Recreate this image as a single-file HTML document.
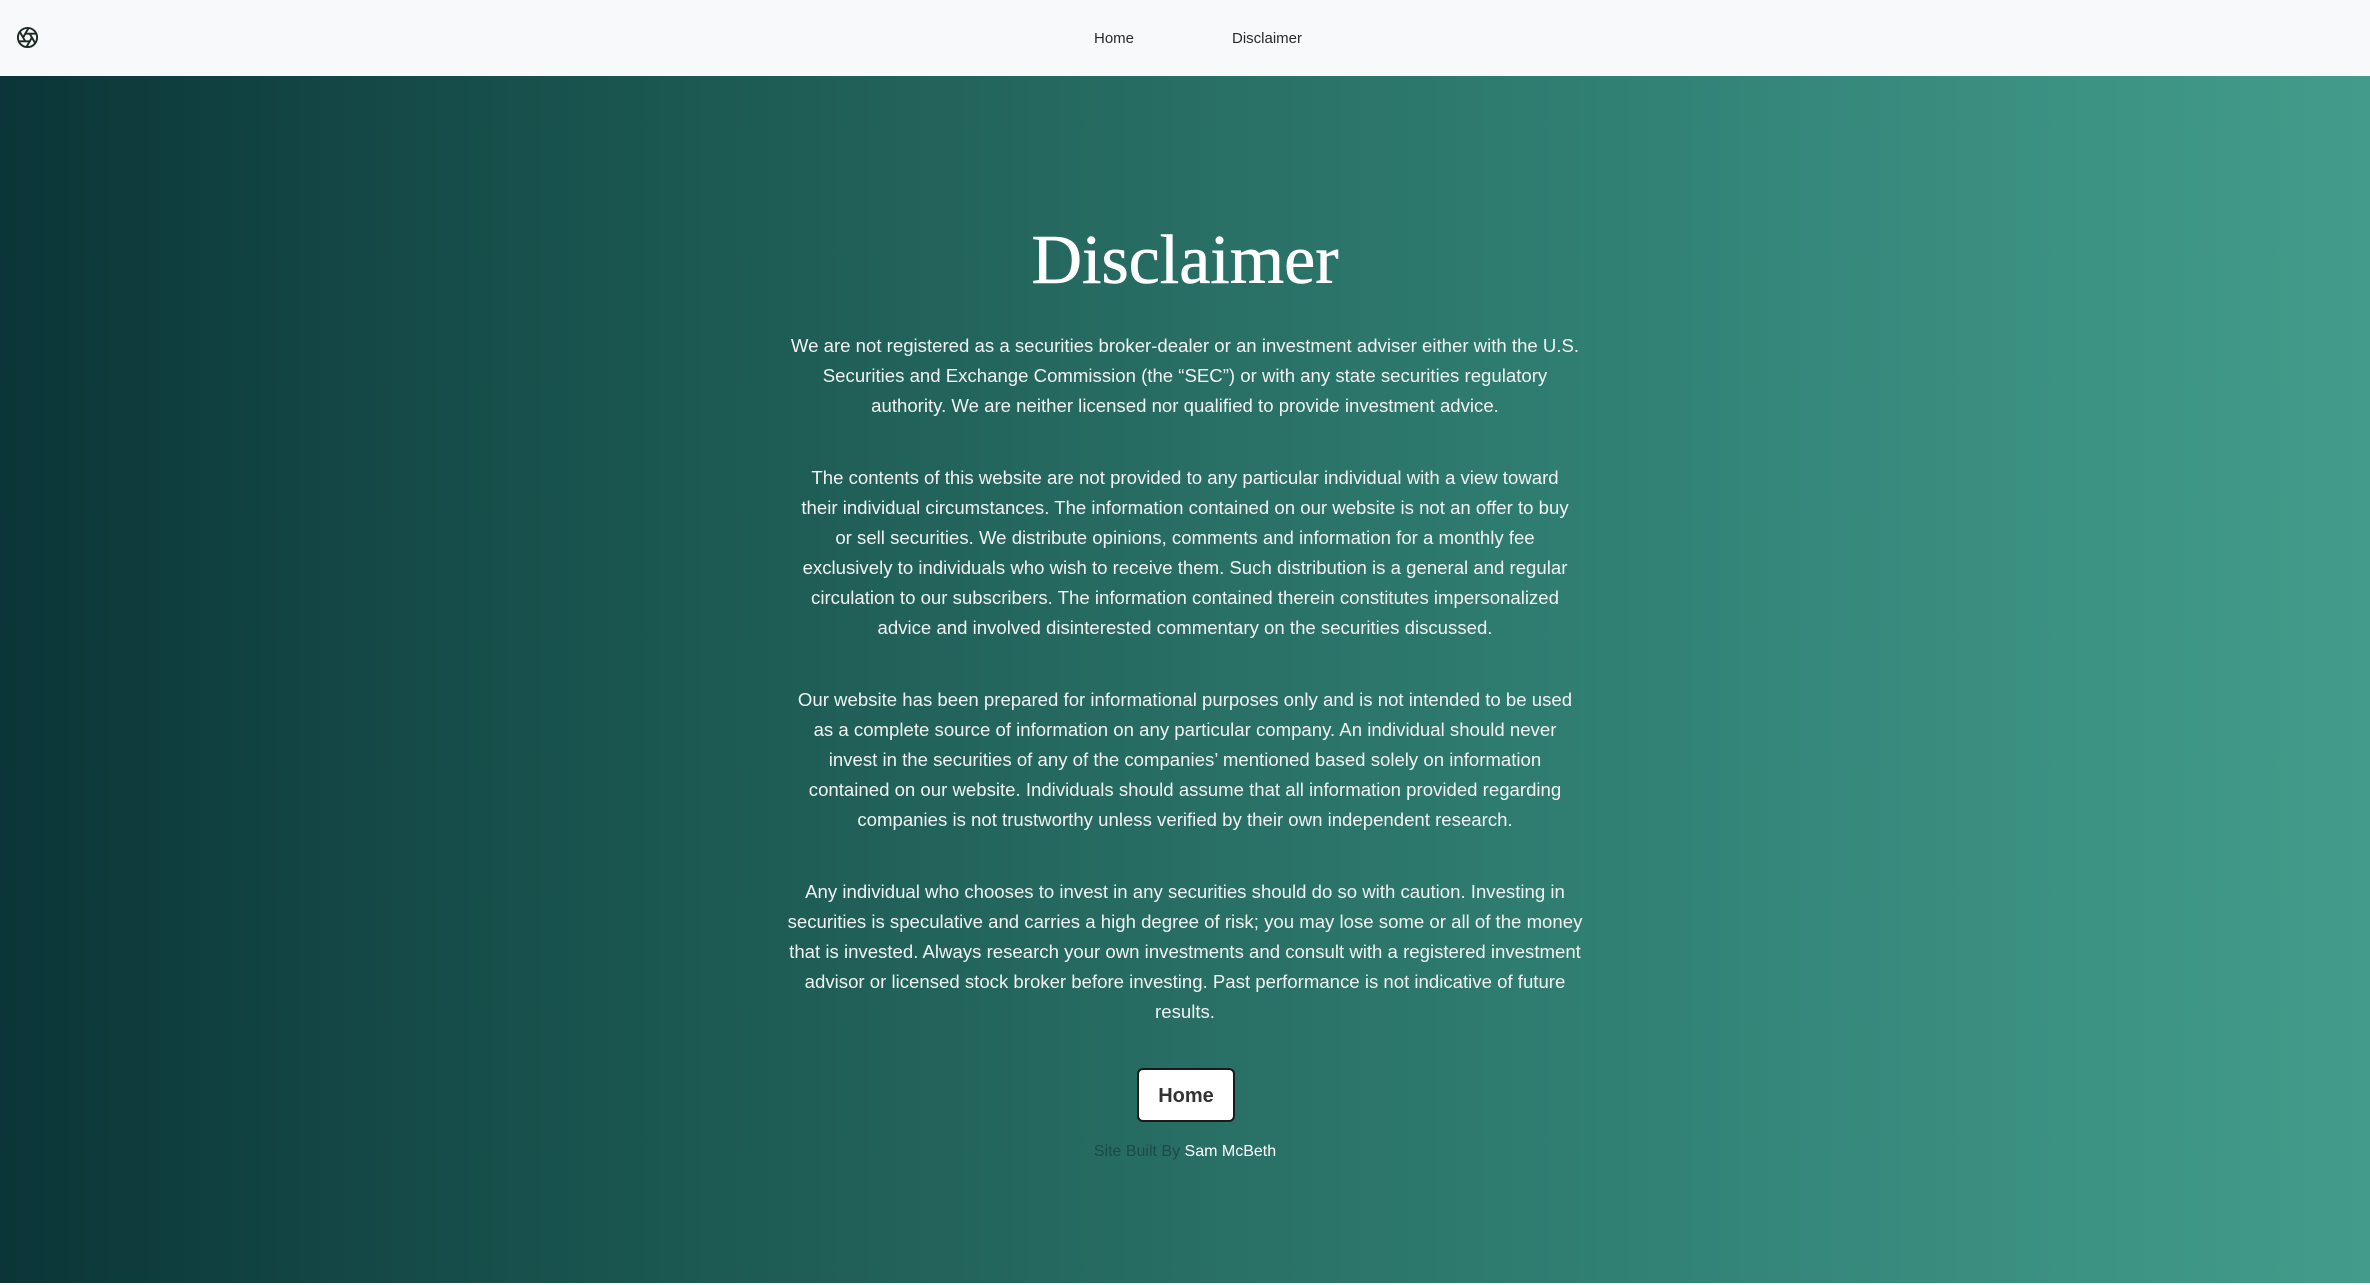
<!DOCTYPE html>
<html><head><meta charset="utf-8"><style>
html,body{margin:0;padding:0;width:2370px;height:1285px;overflow:hidden;background:#fff;font-family:"Liberation Sans",sans-serif}
.nav{position:absolute;left:0;top:0;width:2370px;height:76px;background:#f8f9fa}
.nav a{position:absolute;top:30px;font-size:15px;color:#2a2a2a;text-decoration:none;transform:translateX(-50%)}
.hero{position:absolute;left:0;top:76px;width:2370px;height:1207px;background:linear-gradient(90deg,#0b3538 0%,#1c5a53 30%,#286e64 50%,#34877a 75%,#439c8b 100%)}
h1{position:absolute;left:0;width:2370px;top:221px;margin:0;text-align:center;font-family:"Liberation Serif",serif;font-weight:normal;font-size:70px;line-height:80px;color:#fff;-webkit-text-stroke:0.6px #fff}
.p{position:absolute;left:0;width:2370px;text-align:center;color:#f2f2f2;font-size:18.6px;line-height:30px;white-space:nowrap}
.btn{position:absolute;left:1137px;top:1068px;width:94px;height:50px;background:#fff;border:2px solid #1a1a1a;border-radius:6px;box-sizing:content-box;text-align:center;line-height:52px;font-weight:bold;font-size:20px;color:#333}
.foot{position:absolute;left:0;width:2370px;top:1143px;text-align:center;font-size:16px;color:#1d4a46}
.foot span{color:#fff}
</style></head><body>
<div class="nav">
<svg style="position:absolute;left:16px;top:26px" width="23" height="23" viewBox="0 0 24 24" fill="none" stroke="#1a2a22" stroke-width="2"><circle cx="12" cy="12" r="10"/><path d="M14.3 8l5.7 9.9M9.7 8h11.4M7.4 12l5.7-9.9M9.7 16L4 6.1M14.3 16H2.9M16.6 12l-5.7 9.9"/></svg>
<a style="left:1114px">Home</a>
<a style="left:1267px">Disclaimer</a>
</div>
<div class="hero"></div>
<h1>Disclaimer</h1>
<div class="p" style="top:331px">We are not registered as a securities broker-dealer or an investment adviser either with the U.S.<br>Securities and Exchange Commission (the “SEC”) or with any state securities regulatory<br>authority. We are neither licensed nor qualified to provide investment advice.</div>
<div class="p" style="top:463px">The contents of this website are not provided to any particular individual with a view toward<br>their individual circumstances. The information contained on our website is not an offer to buy<br>or sell securities. We distribute opinions, comments and information for a monthly fee<br>exclusively to individuals who wish to receive them. Such distribution is a general and regular<br>circulation to our subscribers. The information contained therein constitutes impersonalized<br>advice and involved disinterested commentary on the securities discussed.</div>
<div class="p" style="top:685px">Our website has been prepared for informational purposes only and is not intended to be used<br>as a complete source of information on any particular company. An individual should never<br>invest in the securities of any of the companies’ mentioned based solely on information<br>contained on our website. Individuals should assume that all information provided regarding<br>companies is not trustworthy unless verified by their own independent research.</div>
<div class="p" style="top:877px">Any individual who chooses to invest in any securities should do so with caution. Investing in<br>securities is speculative and carries a high degree of risk; you may lose some or all of the money<br>that is invested. Always research your own investments and consult with a registered investment<br>advisor or licensed stock broker before investing. Past performance is not indicative of future<br>results.</div>
<div class="btn">Home</div>
<div class="foot">Site Built By <span>Sam McBeth</span></div>
</body></html>
